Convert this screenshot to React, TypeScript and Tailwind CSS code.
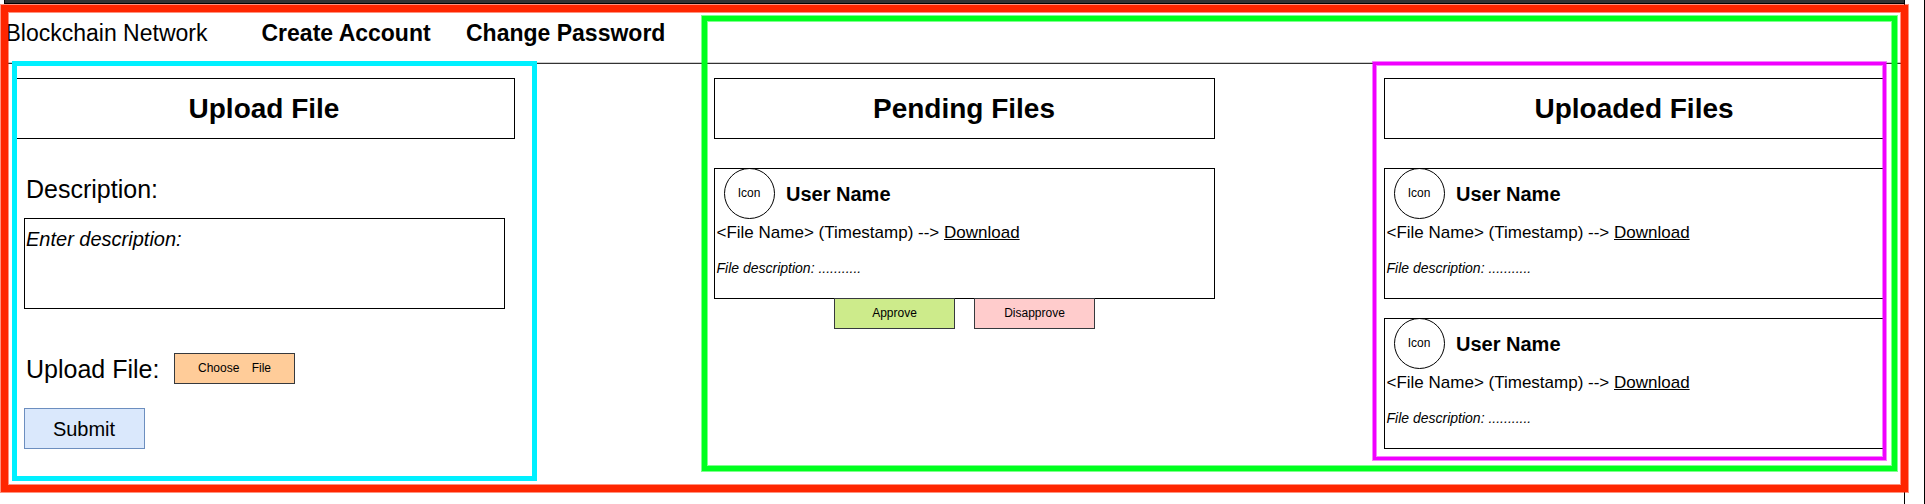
import React from "react";

function PanelTitle({ children }: { children: React.ReactNode }) {
  return (
    <h2 className="flex h-[61px] items-center justify-center border border-black pr-px text-[28px] leading-8 font-bold">
      {children}
    </h2>
  );
}

function FileCard() {
  return (
    <article className="flex h-[131px] flex-col border border-black">
      <div className="-mt-px ml-[9px] flex items-center">
        <div className="flex size-[51px] items-center justify-center rounded-full border border-black pr-px pb-[2px] text-xs">
          Icon
        </div>
        <h3 className="ml-[11px] text-xl leading-6 font-bold">User Name</h3>
      </div>
      <p className="mt-[4px] ml-[1.5px] text-[17px] leading-5">
        &lt;File Name&gt; (Timestamp) --&gt; <a className="underline">Download</a>
      </p>
      <p className="mt-[17px] ml-[1.5px] text-sm leading-4 italic">File description: ...........</p>
    </article>
  );
}

export default function App() {
  return (
    <div className="relative flex h-[504px] w-[1925px] overflow-hidden border-r border-black bg-white font-['Liberation_Sans',Arial,sans-serif] text-black">
      <div className="ml-1 flex w-[1901px] flex-col border-r border-black">
        <div className="h-1 shrink-0 border-b border-l border-black bg-[#333333]" />
        <nav className="flex h-[60px] shrink-0 border-b border-[#333333] pt-[15px] text-[23px] leading-7 shadow-[inset_0_-1px_0_#cccccc]">
          <span className="ml-[1.5px] w-[256px]">Blockchain Network</span>
          <a className="w-[204.5px] font-bold">Create Account</a>
          <a className="font-bold">Change Password</a>
        </nav>
        <main className="flex pt-[14px] pl-[10px]">
          <section className="w-[501px] shrink-0">
            <PanelTitle>Upload File</PanelTitle>
            <div className="ml-[10px] flex flex-col items-start">
              <label className="mt-[35px] ml-[2px] text-[25px] leading-[30px]">Description:</label>
              <div className="mt-[14px] h-[91px] w-[481px] border border-black pt-[8px] pl-px text-xl leading-6 italic">
                Enter description:
              </div>
              <div className="mt-[44px] flex h-[31px] items-center">
                <span className="w-[148px] pl-[2px] text-[25px] leading-[30px]">Upload File:</span>
                <button className="ml-[2px] h-[31px] w-[121px] border border-[#36393d] bg-[#ffcc99] pb-[2px] text-xs whitespace-pre [word-spacing:-0.25px]">
                  {"Choose\u00a0 \u00a0 File"}
                </button>
              </div>
              <button className="mt-[24px] h-[41px] w-[121px] border border-[#6c8ebf] bg-[#dae8fc] pr-px text-xl leading-6">
                Submit
              </button>
            </div>
          </section>
          <section className="ml-[199px] w-[501px] shrink-0">
            <PanelTitle>Pending Files</PanelTitle>
            <div className="mt-[29px]">
              <FileCard />
            </div>
            <div className="-mt-px flex justify-center gap-[19px]">
              <button className="h-[31px] w-[121px] border border-[#36393d] bg-[#cdeb8b] pb-[2px] text-xs">
                Approve
              </button>
              <button className="h-[31px] w-[121px] border border-[#36393d] bg-[#ffcccc] pb-[2px] text-xs">
                Disapprove
              </button>
            </div>
          </section>
          <section className="ml-[169px] w-[501px] shrink-0">
            <PanelTitle>Uploaded Files</PanelTitle>
            <div className="mt-[29px] flex flex-col gap-[19px]">
              <FileCard />
              <FileCard />
            </div>
          </section>
        </main>
      </div>

      {/* Component outlines drawn over the page */}
      <div className="pointer-events-none absolute top-[5px] left-px h-[487px] w-[1907px] border-7 border-[#ff2600] shadow-[0_0_0_1px_#ff260080,inset_0_0_0_1px_#ff260080]" />
      <div className="pointer-events-none absolute top-[61px] left-[12px] h-[420px] w-[525px] border-5 border-[#00f0ff]" />
      <div className="pointer-events-none absolute top-[16px] left-[702px] h-[455px] w-[1195px] border-5 border-[#00ff1e] shadow-[0_0_0_1px_#00ff1e80,inset_0_0_0_1px_#00ff1e80]" />
      <div className="pointer-events-none absolute top-[62px] left-[1373px] h-[398px] w-[513px] border-3 border-[#f000ff] shadow-[0_0_0_1px_#f000ff80,inset_0_0_0_1px_#f000ff80]" />
    </div>
  );
}
